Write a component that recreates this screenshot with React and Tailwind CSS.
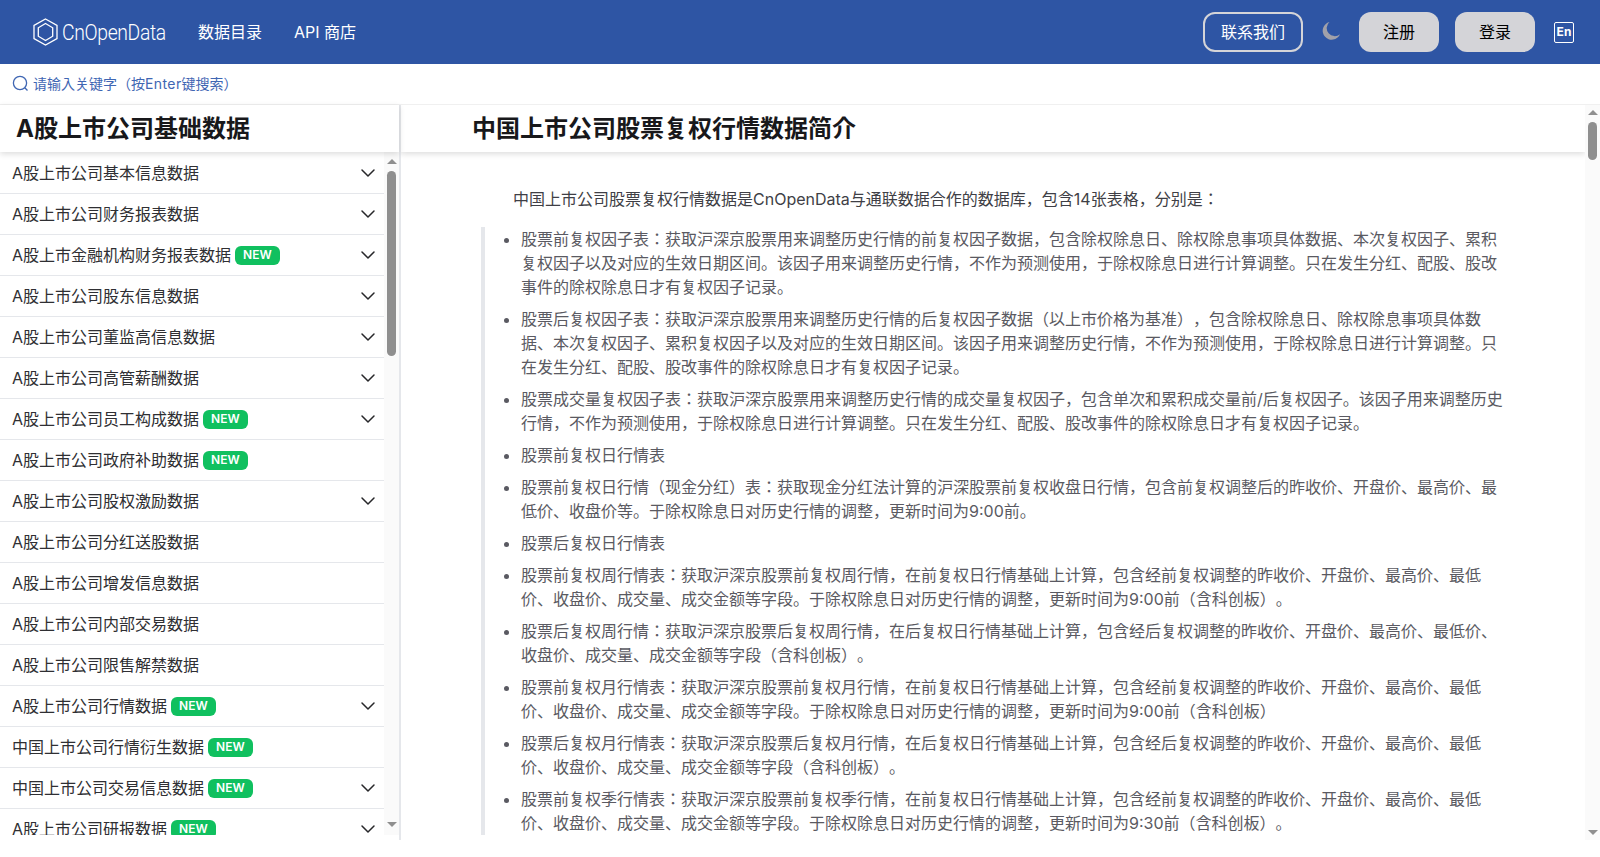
import React from "react";
import { ChevronDown } from "lucide-react";

const rows = [
  ["A股上市公司基本信息数据", false, true],
  ["A股上市公司财务报表数据", false, true],
  ["A股上市金融机构财务报表数据", true, true],
  ["A股上市公司股东信息数据", false, true],
  ["A股上市公司董监高信息数据", false, true],
  ["A股上市公司高管薪酬数据", false, true],
  ["A股上市公司员工构成数据", true, true],
  ["A股上市公司政府补助数据", true, false],
  ["A股上市公司股权激励数据", false, true],
  ["A股上市公司分红送股数据", false, false],
  ["A股上市公司增发信息数据", false, false],
  ["A股上市公司内部交易数据", false, false],
  ["A股上市公司限售解禁数据", false, false],
  ["A股上市公司行情数据", true, true],
  ["中国上市公司行情衍生数据", true, false],
  ["中国上市公司交易信息数据", true, true],
  ["A股上市公司研报数据", true, true],
];

const items = [
  "股票前复权因子表：获取沪深京股票用来调整历史行情的前复权因子数据，包含除权除息日、除权除息事项具体数据、本次复权因子、累积复权因子以及对应的生效日期区间。该因子用来调整历史行情，不作为预测使用，于除权除息日进行计算调整。只在发生分红、配股、股改事件的除权除息日才有复权因子记录。",
  "股票后复权因子表：获取沪深京股票用来调整历史行情的后复权因子数据（以上市价格为基准），包含除权除息日、除权除息事项具体数据、本次复权因子、累积复权因子以及对应的生效日期区间。该因子用来调整历史行情，不作为预测使用，于除权除息日进行计算调整。只在发生分红、配股、股改事件的除权除息日才有复权因子记录。",
  "股票成交量复权因子表：获取沪深京股票用来调整历史行情的成交量复权因子，包含单次和累积成交量前/后复权因子。该因子用来调整历史行情，不作为预测使用，于除权除息日进行计算调整。只在发生分红、配股、股改事件的除权除息日才有复权因子记录。",
  "股票前复权日行情表",
  "股票前复权日行情（现金分红）表：获取现金分红法计算的沪深股票前复权收盘日行情，包含前复权调整后的昨收价、开盘价、最高价、最低价、收盘价等。于除权除息日对历史行情的调整，更新时间为9:00前。",
  "股票后复权日行情表",
  "股票前复权周行情表：获取沪深京股票前复权周行情，在前复权日行情基础上计算，包含经前复权调整的昨收价、开盘价、最高价、最低价、收盘价、成交量、成交金额等字段。于除权除息日对历史行情的调整，更新时间为9:00前（含科创板）。",
  "股票后复权周行情：获取沪深京股票后复权周行情，在后复权日行情基础上计算，包含经后复权调整的昨收价、开盘价、最高价、最低价、收盘价、成交量、成交金额等字段（含科创板）。",
  "股票前复权月行情表：获取沪深京股票前复权月行情，在前复权日行情基础上计算，包含经前复权调整的昨收价、开盘价、最高价、最低价、收盘价、成交量、成交金额等字段。于除权除息日对历史行情的调整，更新时间为9:00前（含科创板）",
  "股票后复权月行情表：获取沪深京股票后复权月行情，在后复权日行情基础上计算，包含经后复权调整的昨收价、开盘价、最高价、最低价、收盘价、成交量、成交金额等字段（含科创板）。",
  "股票前复权季行情表：获取沪深京股票前复权季行情，在前复权日行情基础上计算，包含经前复权调整的昨收价、开盘价、最高价、最低价、收盘价、成交量、成交金额等字段。于除权除息日对历史行情的调整，更新时间为9:30前（含科创板）。",
];

function Logo() {
  return (
    <svg className="ml-px" width="25" height="28" viewBox="0 0 25 28" fill="none" stroke="white" strokeWidth="1.3">
      <path d="M12.5 1 L24 7.5 V20.5 L12.5 27 L1 20.5 V7.5 Z" />
      <path d="M12.5 5.5 L19.7 9.8 V18.2 L12.5 22.5 L5.3 18.2 V9.8 Z" />
    </svg>
  );
}

function Row({ label, isNew, chevron }) {
  return (
    <div className="h-[41px] shrink-0 flex items-center justify-between border-b border-[#e5e7eb] pl-3 pr-[4px]">
      <div className="flex items-center">
        <span className="text-base text-[#2f2f33]">{label}</span>
        {isNew && (
          <span className="ml-1 h-[19px] px-2 flex items-center rounded-md bg-[#10c05f] text-white text-xs font-semibold">NEW</span>
        )}
      </div>
      {chevron && <ChevronDown size={24} strokeWidth={1.5} className="text-[#27272a]" />}
    </div>
  );
}

function Scrollbar({ thumbTop, thumbHeight, topArrow, bottomArrow }) {
  return (
    <div className="w-[15px] shrink-0 bg-[#fafafa] flex flex-col items-center">
      <div className="h-[15px] shrink-0 flex justify-center" style={{ paddingTop: topArrow }}>
        <svg width="10" height="5" viewBox="0 0 10 5" fill="#8f8f8f"><path d="M5 0 L10 5 H0 Z" /></svg>
      </div>
      <div className="flex-1 w-full flex flex-col items-center">
        <div className="shrink-0" style={{ height: thumbTop }} />
        <div className="w-[9px] rounded-[5px] bg-[#8f8f8f] shrink-0" style={{ height: thumbHeight }} />
      </div>
      <div className="h-[15px] shrink-0 flex justify-center" style={{ paddingTop: bottomArrow }}>
        <svg width="10" height="5" viewBox="0 0 10 5" fill="#8f8f8f"><path d="M0 0 H10 L5 5 Z" /></svg>
      </div>
    </div>
  );
}

export default function App() {
  return (
    <div className="h-screen flex flex-col bg-white overflow-hidden [text-spacing-trim:space-all] font-['Inter','Noto_Sans_CJK_JP','Noto_Sans_CJK_SC',sans-serif]">
      <header className="h-16 shrink-0 bg-[#2e55a4] flex items-center justify-between pl-8 pr-[26px]">
        <div className="flex items-center text-white">
          <Logo />
          <span className="ml-[4px] w-[104px] text-[22px] font-['Roboto',sans-serif] font-light tracking-[-0.4px] scale-x-[0.88] origin-left whitespace-nowrap">CnOpenData</span>
          <span className="ml-[32px] text-base">数据目录</span>
          <span className="ml-8 text-base">API 商店</span>
        </div>
        <div className="flex items-center">
          <button className="w-[100px] h-10 rounded-xl border-2 border-[#d4d4d8] text-white text-base">联系我们</button>
          <svg className="ml-[19px] mr-[2px] mb-[2px]" width="18" height="18" viewBox="0 0 18 18" fill="#a1a1aa">
            <path d="M7.5 0 A9 9 0 1 0 18 12.2 A7.5 7.5 0 0 1 7.5 0 Z" />
          </svg>
          <button className="ml-[17px] w-20 h-10 rounded-xl bg-[#d4d4d8] text-black text-base">注册</button>
          <button className="ml-4 w-20 h-10 rounded-xl bg-[#d4d4d8] text-black text-base">登录</button>
          <span className="ml-[19px] w-5 h-[21px] border border-white rounded-[2px] flex items-center justify-center text-white text-xs font-bold">En</span>
        </div>
      </header>

      <div className="h-[41px] shrink-0 flex items-center pl-3 border-b border-[#f0f0f0] text-[#3f66b3]">
        <svg className="mb-[2px]" width="17" height="17" viewBox="0 0 17 17" fill="none" stroke="currentColor" strokeWidth="1.3">
          <circle cx="8" cy="8" r="6.6" />
          <path d="M12.8 12.8 L15.5 15.5" />
        </svg>
        <span className="ml-[4px] text-sm">请输入关键字（按<span className="tracking-[0.4px]">Enter</span>键搜索）</span>
      </div>

      <main className="h-[735px] shrink-0 flex">
        <aside className="w-[401px] shrink-0 border-r-2 border-[#e5e7eb] flex flex-col">
          <div className="h-[47px] shrink-0 flex items-center pl-4 text-2xl font-bold text-[#18181b] shadow-[0_2px_6px_rgba(0,0,0,0.14)] relative">
            A股上市公司基础数据
          </div>
          <div className="h-[683px] flex">
            <div className="flex-1 min-w-0 overflow-hidden flex flex-col pt-px">
              {rows.map((r) => (
                <Row key={r[0]} label={r[0]} isNew={r[1]} chevron={r[2]} />
              ))}
            </div>
            <Scrollbar thumbTop={4} thumbHeight={185} topArrow={7} bottomArrow={2} />
          </div>
        </aside>

        <section className="flex-1 min-w-0 flex">
          <div className="flex-1 min-w-0 overflow-hidden">
            <div className="h-[47px] bg-white shadow-[0_2px_6px_rgba(0,0,0,0.14)] flex items-center pl-[71px] text-2xl font-bold text-[#18181b]">
              中国上市公司股票复权行情数据简介
            </div>
            <div className="w-[1024px] mx-auto pt-[35px]">
              <p className="pl-8 text-base leading-6 text-[#3f3f46]">
                中国上市公司股票复权行情数据是CnOpenData与通联数据合作的数据库，包含14张表格，分别是：
              </p>
              <ul className="mt-[16px] border-l-4 border-[#e5e7eb] pl-9 list-disc text-base leading-6 text-[#5a5a62]">
                {items.map((t, i) => (
                  <li key={i} className="mb-2">{t}</li>
                ))}
              </ul>
            </div>
          </div>
          <Scrollbar thumbTop={2} thumbHeight={38} topArrow={5} bottomArrow={5} />
        </section>
      </main>
    </div>
  );
}
